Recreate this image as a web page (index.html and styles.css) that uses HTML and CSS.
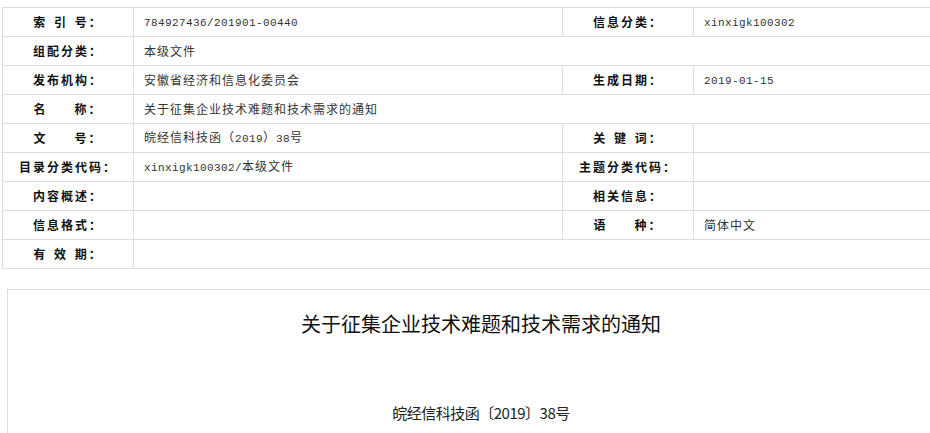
FILE: index.html
```html
<!DOCTYPE html>
<html lang="zh-CN">
<head>
<meta charset="utf-8">
<title>关于征集企业技术难题和技术需求的通知</title>
<link rel="stylesheet" href="styles.css">
</head>
<body>
<div class="page">
  <table class="meta">
    <colgroup>
      <col class="c-label"><col class="c-value"><col class="c-label"><col class="c-last">
    </colgroup>
    <tr>
      <th>索 引 号：</th>
      <td><span class="en">784927436/201901-00440</span></td>
      <th>信息分类：</th>
      <td><span class="en">xinxigk100302</span></td>
    </tr>
    <tr>
      <th>组配分类：</th>
      <td colspan="3">本级文件</td>
    </tr>
    <tr>
      <th>发布机构：</th>
      <td>安徽省经济和信息化委员会</td>
      <th>生成日期：</th>
      <td><span class="en">2019-01-15</span></td>
    </tr>
    <tr>
      <th>名&nbsp;&nbsp;&nbsp;&nbsp;称：</th>
      <td colspan="3">关于征集企业技术难题和技术需求的通知</td>
    </tr>
    <tr>
      <th>文&nbsp;&nbsp;&nbsp;&nbsp;号：</th>
      <td>皖经信科技函（<span class="en">2019</span>）<span class="en">38</span>号</td>
      <th>关 键 词：</th>
      <td></td>
    </tr>
    <tr>
      <th>目录分类代码：</th>
      <td><span class="en">xinxigk100302/</span>本级文件</td>
      <th>主题分类代码：</th>
      <td></td>
    </tr>
    <tr>
      <th>内容概述：</th>
      <td></td>
      <th>相关信息：</th>
      <td></td>
    </tr>
    <tr>
      <th>信息格式：</th>
      <td></td>
      <th>语&nbsp;&nbsp;&nbsp;&nbsp;种：</th>
      <td>简体中文</td>
    </tr>
    <tr>
      <th>有 效 期：</th>
      <td colspan="3"></td>
    </tr>
  </table>

  <div class="article">
    <h1 class="title">关于征集企业技术难题和技术需求的通知</h1>
    <p class="docno">皖经信科技函〔2019〕38号</p>
  </div>
</div>
</body>
</html>
```

FILE: styles.css
```css
html, body {
  margin: 0;
  padding: 0;
  background: #fff;
}

body {
  font-family: "Noto Sans CJK SC", "Liberation Sans", sans-serif;
  font-size: 12px;
  color: #333;
  overflow: hidden;
}

.page {
  padding: 7px 0 0 2px;
}

.meta {
  border-collapse: collapse;
  table-layout: fixed;
  width: 928px;
}

.c-label { width: 131px; }
.c-value { width: 429px; }
.c-last { width: 237px; }

.meta th,
.meta td {
  border: 1px solid #dcdcdc;
  height: 28px;
  padding: 0;
  line-height: 16px;
  letter-spacing: 1px;
  vertical-align: middle;
  white-space: nowrap;
  overflow: hidden;
}

.meta tr > :last-child {
  border-right: none;
}

.meta th {
  font-weight: bold;
  color: #111;
  text-align: center;
  letter-spacing: 2px;
  word-spacing: 2px;
}

.meta td {
  text-align: left;
  padding-left: 10px;
  color: #333;
}

.en {
  font-family: "Liberation Mono", "DejaVu Sans Mono", monospace;
  font-size: 11px;
  letter-spacing: 0.4px;
}

.article {
  margin: 20px 0 0 5px;
  height: 144px;
  border-top: 1px solid #dcdcdc;
  border-left: 1px solid #dcdcdc;
  padding-top: 21px;
  box-sizing: border-box;
  overflow: hidden;
}

.title {
  margin: 0;
  width: 946px;
  font-size: 20px;
  font-weight: normal;
  line-height: 26px;
  color: #111;
  text-align: center;
}

.docno {
  margin: 66px 0 0;
  width: 946px;
  font-size: 15px;
  line-height: 20px;
  color: #222;
  text-align: center;
  letter-spacing: -0.5px;
}
```
